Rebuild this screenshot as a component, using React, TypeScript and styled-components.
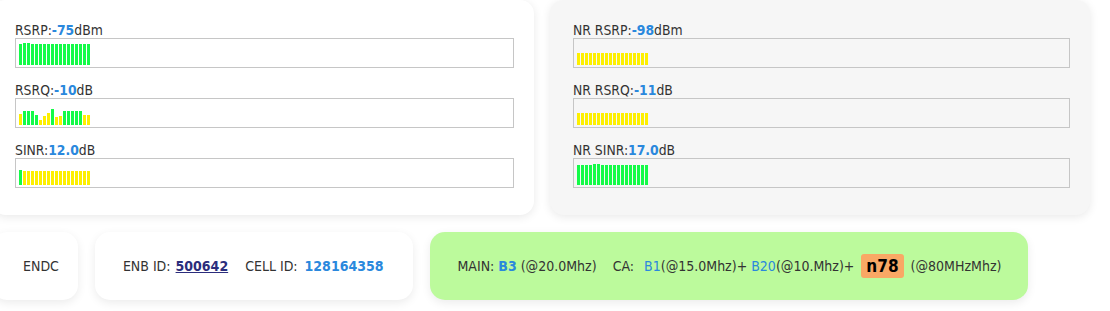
import React from "react";
import styled, { createGlobalStyle } from "styled-components";

const Global = createGlobalStyle`
  html, body { margin: 0; padding: 0; background: #ffffff; }
  body {
    font-family: "DejaVu Sans Condensed", "DejaVu Sans", sans-serif;
    color: #333333;
    width: 1110px;
    height: 311px;
    overflow: hidden;
  }
`;

const Page = styled.div`
  display: flex;
  flex-direction: column;
  gap: 17px;
  margin-left: -8px;
`;

const TopRow = styled.div`
  display: grid;
  grid-template-columns: 542px 540px;
  gap: 16px;
`;

const Card = styled.div<{ $tone: "white" | "gray" }>`
  background: ${(p) => (p.$tone === "white" ? "#ffffff" : "#f6f6f6")};
  border-radius: 14px;
  box-shadow: 0 2px 10px rgba(0, 0, 0, 0.09);
  padding: 23px 20px 28px 23px;
  display: flex;
  flex-direction: column;
  gap: 15px;
  height: 215px;
  box-sizing: border-box;
`;

const Metric = styled.div`
  display: flex;
  flex-direction: column;
`;

const Label = styled.div`
  font-size: 13.8px;
  line-height: 15px;
  height: 15px;
  color: #333;
`;

const Value = styled.b`
  color: #2a88dd;
  font-weight: bold;
`;

const Box = styled.div<{ $bg: string }>`
  height: 30px;
  box-sizing: border-box;
  border: 1px solid #c6c6c6;
  background: ${(p) => p.$bg};
  display: flex;
  align-items: flex-end;
  gap: 1px;
  padding: 0 3px 2px 3px;
`;

const Bar = styled.div<{ $c: "g" | "y" }>`
  width: 3px;
  flex: none;
  background: ${(p) => (p.$c === "g" ? "#14fb48" : "#fdef00")};
`;

const BottomRow = styled.div`
  display: flex;
  gap: 17px;
  height: 68px;
  align-items: stretch;
`;

const Pill = styled.div<{ $bg?: string; $pl: number; $pr: number }>`
  background: ${(p) => p.$bg || "#ffffff"};
  border-radius: 15px;
  box-shadow: 0 3px 10px rgba(0, 0, 0, 0.08);
  display: flex;
  align-items: center;
  padding: 0 ${(p) => p.$pr}px 0 ${(p) => p.$pl}px;
  font-size: 14px;
  color: #333;
  white-space: pre;
`;

const Gap = styled.span<{ $w: number }>`
  display: inline-block;
  width: ${(p) => p.$w}px;
`;

const EnbLink = styled.a`
  color: #2b2d7c;
  font-weight: bold;
  text-decoration: underline;
  margin-left: 5px;
`;

const CellId = styled.b`
  color: #2a88dd;
  margin-left: 3px;
`;

const Band = styled.span<{ $bold?: boolean }>`
  color: #2a88dd;
  font-weight: ${(p) => (p.$bold ? "bold" : "normal")};
`;

const NrBadge = styled.span`
  background: #f9a865;
  color: #000;
  font-weight: bold;
  font-size: 17px;
  line-height: 20px;
  border-radius: 3px;
  padding: 2px 5px;
  margin: 0 7px;
`;

type B = ["g" | "y", number];

const full = (c: "g" | "y", h: number, n = 18): B[] =>
  Array.from({ length: n }, () => [c, h] as B);

const rsrp: B[] = full("g", 21).map((b, i) => (i > 0 && i < 3 ? ["g", 22] : b));
const rsrq: B[] = [
  ["y", 11], ["g", 14], ["g", 14], ["g", 14], ["g", 10], ["y", 5],
  ["y", 9], ["y", 12], ["g", 16], ["y", 8], ["y", 9], ["g", 14],
  ["g", 14], ["g", 14], ["g", 14], ["g", 14], ["y", 10], ["y", 10],
];
const sinr: B[] = [["g", 15], ...full("y", 14, 17)];
const nrRsrp = full("y", 12);
const nrRsrq = full("y", 12);
const nrSinr: B[] = full("g", 20).map((b, i) => (i === 4 || i === 5 ? ["g", 21] : b));

const Signal: React.FC<{ name: string; value: string; unit: string; bars: B[]; bg: string }> = ({
  name,
  value,
  unit,
  bars,
  bg,
}) => (
  <Metric>
    <Label>
      {name}:<Value>{value}</Value>
      {unit}
    </Label>
    <Box $bg={bg}>
      {bars.map(([c, h], i) => (
        <Bar key={i} $c={c} style={{ height: h }} />
      ))}
    </Box>
  </Metric>
);

export default function App() {
  return (
    <>
      <Global />
      <Page>
        <TopRow>
          <Card $tone="white">
            <Signal name="RSRP" value="-75" unit="dBm" bars={rsrp} bg="#ffffff" />
            <Signal name="RSRQ" value="-10" unit="dB" bars={rsrq} bg="#ffffff" />
            <Signal name="SINR" value="12.0" unit="dB" bars={sinr} bg="#ffffff" />
          </Card>
          <Card $tone="gray">
            <Signal name="NR RSRP" value="-98" unit="dBm" bars={nrRsrp} bg="#f6f6f6" />
            <Signal name="NR RSRQ" value="-11" unit="dB" bars={nrRsrq} bg="#f6f6f6" />
            <Signal name="NR SINR" value="17.0" unit="dB" bars={nrSinr} bg="#f6f6f6" />
          </Card>
        </TopRow>
        <BottomRow>
          <Pill $pl={31} $pr={19}>ENDC</Pill>
          <Pill $pl={28} $pr={30}>
            ENB ID:<EnbLink href="#">500642</EnbLink>
            <Gap $w={17} />
            CELL ID: <CellId>128164358</CellId>
          </Pill>
          <Pill $bg="#bcfa9c" $pl={27} $pr={27}>
            MAIN: <Band $bold>B3</Band> (@20.0Mhz)
            <Gap $w={16} />
            CA:
            <Gap $w={10} />
            <Band>B1</Band>(@15.0Mhz)+ <Band>B20</Band>(@10.Mhz)+
            <NrBadge>n78</NrBadge>(@80MHzMhz)
          </Pill>
        </BottomRow>
      </Page>
    </>
  );
}
